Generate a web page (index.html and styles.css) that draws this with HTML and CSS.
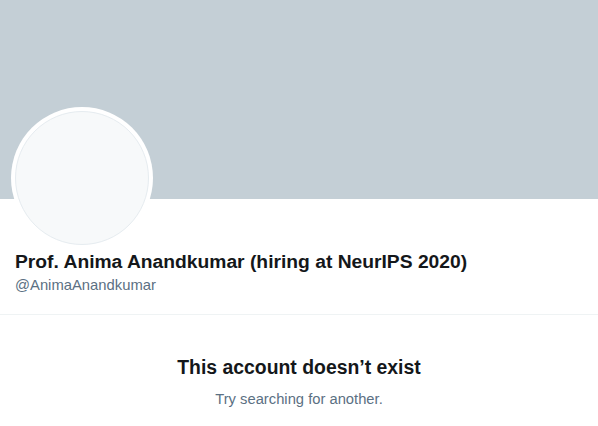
FILE: index.html
```html
<!DOCTYPE html>
<html>
<head>
<meta charset="utf-8">
<link rel="stylesheet" href="styles.css">
</head>
<body>
<div class="page">
  <div class="banner"></div>
  <div class="profile">
    <div class="avatar"><div class="avatar-inner"></div></div>
    <div class="name">Prof. Anima Anandkumar (hiring at NeurIPS 2020)</div>
    <div class="handle">@AnimaAnandkumar</div>
  </div>
  <div class="empty">
    <div class="empty-title">This account doesn’t exist</div>
    <div class="empty-sub">Try searching for another.</div>
  </div>
</div>
</body>
</html>
```
FILE: styles.css
```css
html, body {
  margin: 0;
  padding: 0;
  background: #ffffff;
}
body {
  font-family: "Liberation Sans", Arial, sans-serif;
  color: #14171a;
}
.page {
  width: 598px;
  height: 426px;
  overflow: hidden;
}
.banner {
  height: 199px;
  background: #c4cfd6;
}
.profile {
  padding: 0 15px 19px 11px;
  border-bottom: 1px solid #eff3f4;
}
.avatar {
  width: 142px;
  height: 142px;
  border-radius: 50%;
  background: #ffffff;
  margin-top: -92px;
  display: flex;
  align-items: center;
  justify-content: center;
}
.avatar-inner {
  width: 132px;
  height: 132px;
  border-radius: 50%;
  background: #f7f9fa;
  border: 1px solid #e6ecf0;
}
.name {
  margin-top: 1px;
  padding-left: 4px;
  font-size: 19.25px;
  font-weight: 700;
  line-height: 24px;
}
.handle {
  margin-top: 1px;
  padding-left: 4px;
  font-size: 14.8px;
  line-height: 20px;
  color: #5b7083;
}
.empty {
  text-align: center;
  padding-top: 39px;
}
.empty-title {
  font-size: 19.4px;
  font-weight: 700;
  line-height: 26px;
}
.empty-sub {
  margin-top: 9px;
  font-size: 14.75px;
  line-height: 20px;
  color: #5b7083;
}
```
